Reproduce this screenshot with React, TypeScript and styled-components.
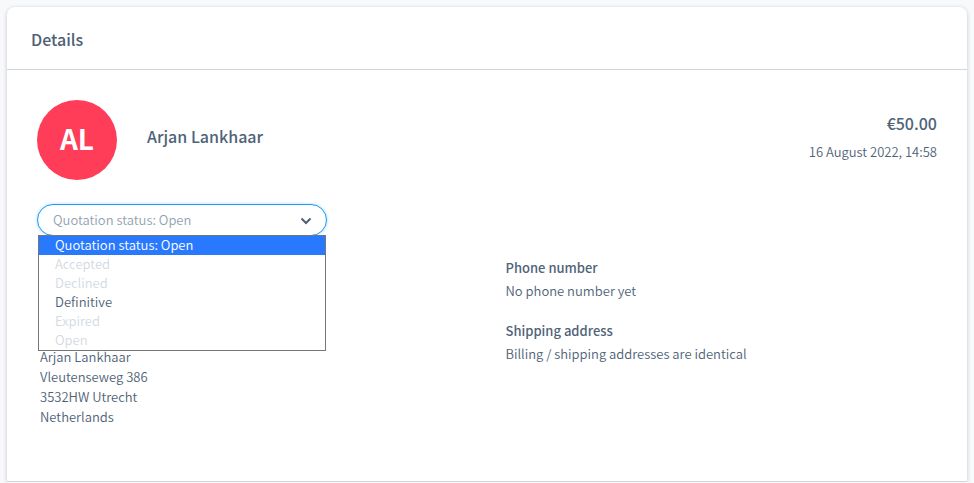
import React, { useState } from "react";
import styled, { createGlobalStyle } from "styled-components";

const GlobalStyle = createGlobalStyle`
  *, *::before, *::after { box-sizing: border-box; }
  body {
    margin: 0;
    background: #f8f9fb;
    color: #4f6378;
    font-family: "Source Sans Pro", "Noto Sans CJK SC", sans-serif;
    font-size: 13px;
    line-height: 20px;
    font-weight: 350;
  }
  h1, h2, h3, p, dl, dd, ul { margin: 0; padding: 0; }
  button, select { font: inherit; }
`;

const Page = styled.main`
  padding: 7px 7px 0;
`;

const Card = styled.section`
  background: #fff;
  border-radius: 8px 8px 0 0;
  box-shadow: 0 1px 4px rgba(20, 20, 30, 0.22);
`;

const CardHeader = styled.header`
  padding: 20px 24px 18px;
  border-bottom: 1px solid #cfd6de;
`;

const CardTitle = styled.h1`
  font-size: 16px;
  line-height: 24px;
  font-weight: 500;
  color: #4d6075;
`;

const CardBody = styled.div`
  padding: 30px 30px 54px;
  border-bottom: 1px solid #cfd6de;
`;

const Summary = styled.div`
  display: flex;
  align-items: flex-start;
  gap: 30px;
`;

const Avatar = styled.div`
  display: flex;
  align-items: center;
  justify-content: center;
  width: 80px;
  height: 80px;
  padding-bottom: 4px;
  border-radius: 50%;
  background: #ff3d59;
  color: #fff;
  font-size: 28px;
  font-weight: 700;
`;

const CustomerName = styled.h2`
  flex: 1;
  padding-top: 24px;
  font-size: 16px;
  line-height: 24px;
  font-weight: 500;
`;

const Totals = styled.div`
  padding-top: 11px;
  text-align: right;
`;

const Amount = styled.p`
  font-size: 16px;
  line-height: 24px;
  font-weight: 500;
`;

const DateText = styled.p`
  margin-top: 7px;
`;

const StatusField = styled.div`
  position: relative;
  width: 290px;
  max-width: 100%;
  margin-top: 24px;
`;

const StatusSelect = styled.select`
  display: block;
  width: 100%;
  height: 32px;
  padding: 0 40px 0 15px;
  appearance: none;
  border: 1px solid #1c9cf5;
  border-radius: 16px;
  outline: none;
  background: #fff;
  box-shadow: 0 0 3px rgba(28, 156, 245, 0.4);
  color: #93a2b2;
`;

const Chevron = styled.svg`
  position: absolute;
  top: 11px;
  right: 15px;
  width: 12px;
  height: 12px;
  pointer-events: none;
`;

const Menu = styled.ul`
  position: absolute;
  z-index: 1;
  top: 31px;
  left: 1px;
  right: 1px;
  border: 1px solid #767676;
  background: #fff;
  list-style: none;
`;

const MenuOption = styled.button<{ $active: boolean }>`
  display: block;
  width: 100%;
  height: 19px;
  padding: 0 16px 1px;
  border: 0;
  background: ${({ $active }) => ($active ? "#2979ff" : "transparent")};
  color: ${({ $active }) => ($active ? "#fff" : "#4f6378")};
  line-height: 18px;
  text-align: left;

  &:disabled { color: #d3dae2; }
`;

const Information = styled.div`
  display: grid;
  grid-template-columns: 1fr 1fr;
  gap: 34px;
  padding: 22px 0 0 3px;
`;

const Address = styled.address`
  padding-top: 89px;
  font-style: normal;
`;

const Facts = styled.dl`
  display: flex;
  flex-direction: column;
  gap: 20px;
`;

const Fact = styled.div`
  display: flex;
  flex-direction: column;
  gap: 3px;
`;

const FactLabel = styled.dt`
  font-weight: 500;
`;

const options = [
  { label: "Quotation status: Open", disabled: false },
  { label: "Accepted", disabled: true },
  { label: "Declined", disabled: true },
  { label: "Definitive", disabled: false },
  { label: "Expired", disabled: true },
  { label: "Open", disabled: true },
];

const addressLines = ["Arjan Lankhaar", "Vleutenseweg 386", "3532HW Utrecht", "Netherlands"];

const facts = [
  { label: "Phone number", value: "No phone number yet" },
  { label: "Shipping address", value: "Billing / shipping addresses are identical" },
];

function StatusPicker() {
  const [status, setStatus] = useState(options[0].label);
  const [open, setOpen] = useState(true);

  const choose = (label: string) => {
    setStatus(label);
    setOpen(false);
  };

  return (
    <StatusField>
      <StatusSelect
        aria-label="Quotation status"
        value={status}
        onChange={(event) => choose(event.target.value)}
      >
        {options.map(({ label, disabled }) => (
          <option key={label} value={label} disabled={disabled}>{label}</option>
        ))}
      </StatusSelect>
      <Chevron viewBox="0 0 12 12" aria-hidden="true">
        <path d="M1.5 3.5 6 8l4.5-4.5" fill="none" stroke="#4d6075" strokeWidth="2" />
      </Chevron>
      {open && (
        <Menu>
          {options.map(({ label, disabled }) => (
            <li key={label}>
              <MenuOption
                type="button"
                $active={label === status}
                disabled={disabled}
                onClick={() => choose(label)}
              >
                {label}
              </MenuOption>
            </li>
          ))}
        </Menu>
      )}
    </StatusField>
  );
}

export default function App() {
  return (
    <>
      <GlobalStyle />
      <Page>
        <Card>
          <CardHeader>
            <CardTitle>Details</CardTitle>
          </CardHeader>
          <CardBody>
            <Summary>
              <Avatar>AL</Avatar>
              <CustomerName>Arjan Lankhaar</CustomerName>
              <Totals>
                <Amount>€50.00</Amount>
                <DateText>16 August 2022, 14:58</DateText>
              </Totals>
            </Summary>
            <StatusPicker />
            <Information>
              <Address>
                {addressLines.map((line) => <p key={line}>{line}</p>)}
              </Address>
              <Facts>
                {facts.map(({ label, value }) => (
                  <Fact key={label}>
                    <FactLabel>{label}</FactLabel>
                    <dd>{value}</dd>
                  </Fact>
                ))}
              </Facts>
            </Information>
          </CardBody>
        </Card>
      </Page>
    </>
  );
}
